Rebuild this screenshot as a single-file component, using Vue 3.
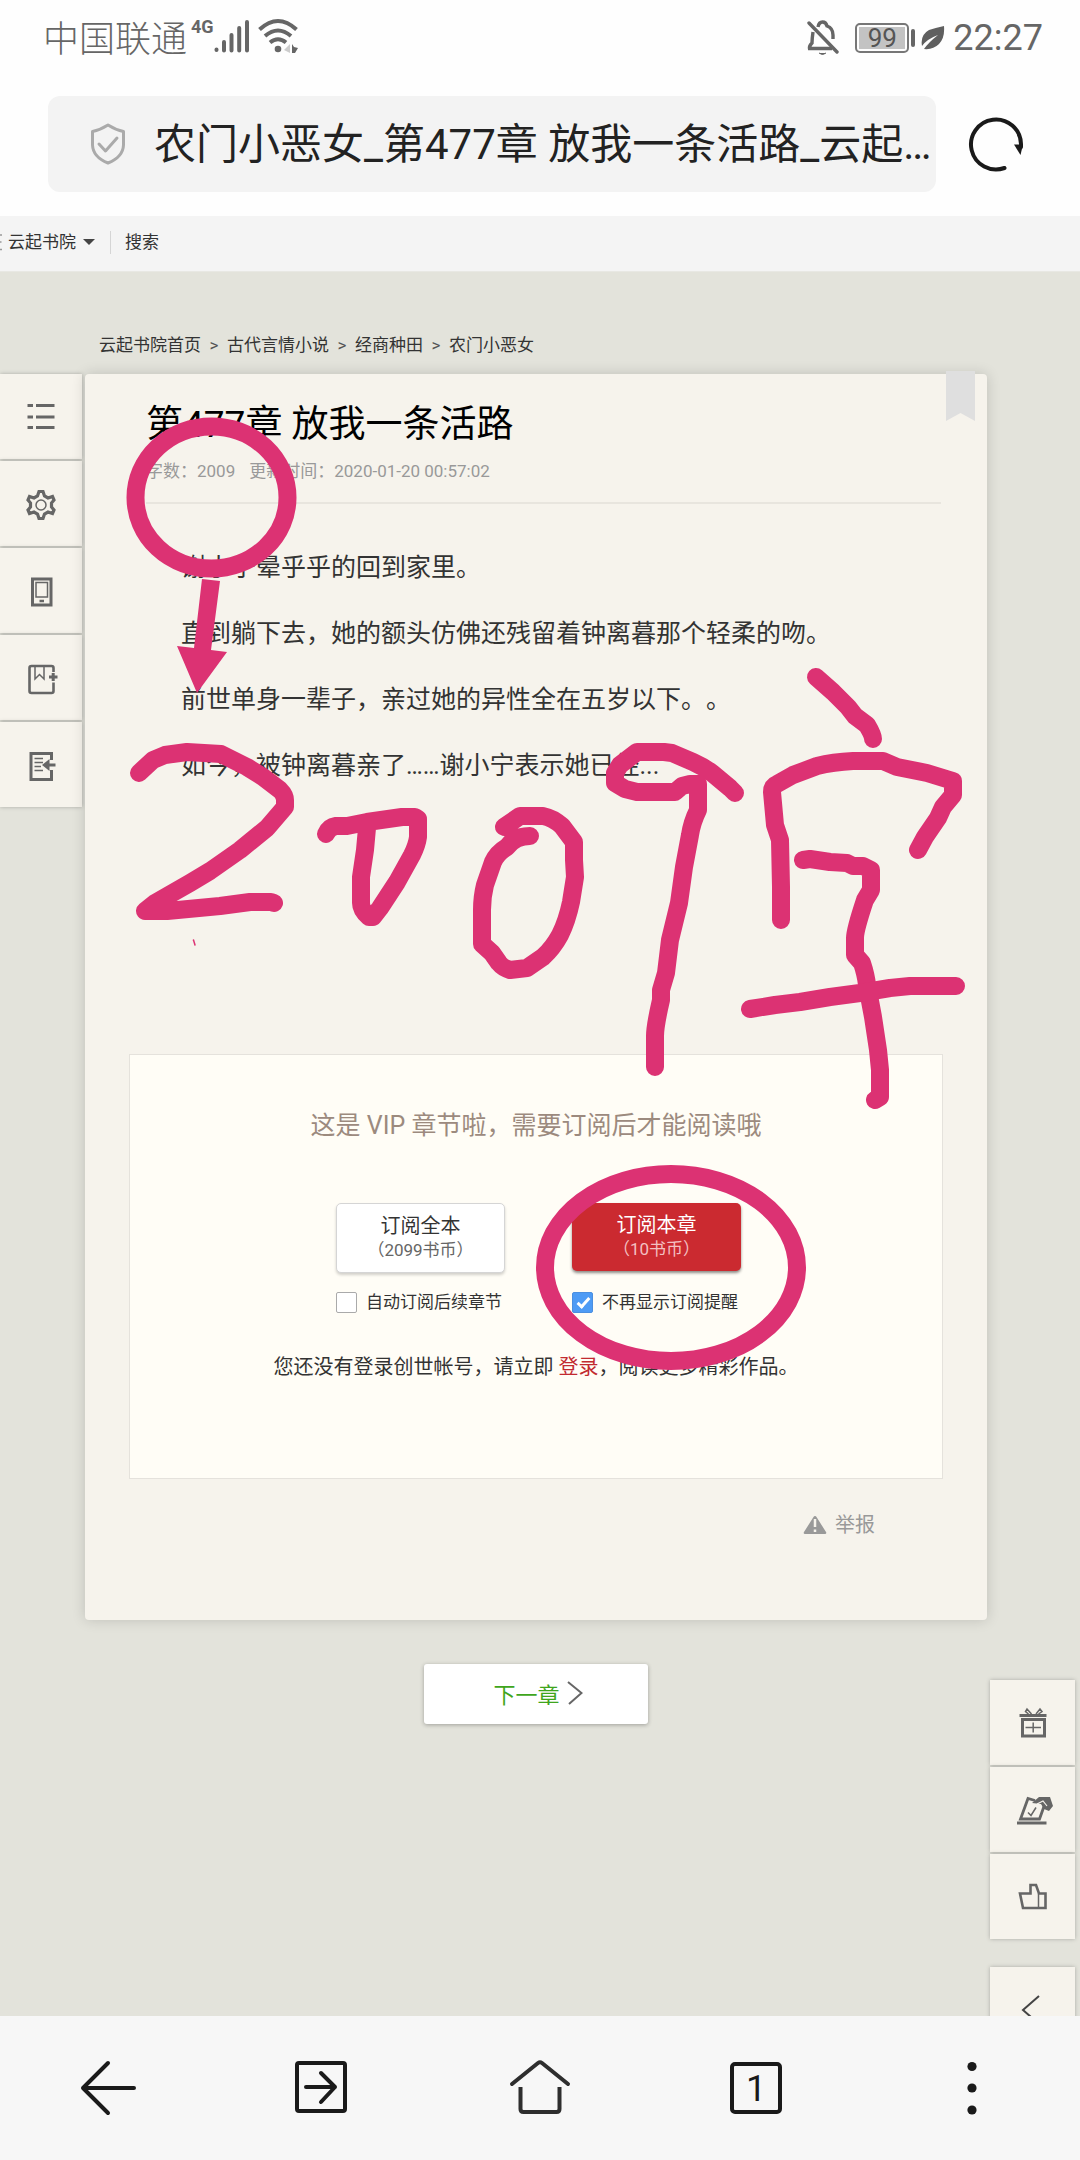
<script setup>
import { ref } from 'vue'

const pageTitle = ref('农门小恶女_第477章 放我一条活路_云起…')
const autoSubscribe = ref(false)
const hideNotice = ref(true)

const crumbs = ['云起书院首页', '古代言情小说', '经商种田', '农门小恶女']

const paragraphs = [
  '谢小宁晕乎乎的回到家里。',
  '直到躺下去，她的额头仿佛还残留着钟离暮那个轻柔的吻。',
  '前世单身一辈子，亲过她的异性全在五岁以下。。',
  '如今，被钟离暮亲了……谢小宁表示她已经...'
]

// 手写标注的笔画
const strokes = [
  // 2
  'M139 773L153 760L165 755L187 752L221 754L247 767L263 777L280 790Q285 795 285 800V807L267 828L240 850L210 871L190 883L155 903L145 911H167L220 906L250 902H271L274 903',
  // 0
  'M326 834Q329 827 336 826H347L367 822L402 817H415L418 819V837Q417 845 412 855L397 882L380 908L373 917H369Q361 910 361 903V877L365 850L367 828',
  // 0
  'M504 827L520 816H543Q553 818 562 826L574 842V860L575 877L571 902Q567 921 560 935Q553 948 543 957L527 968L510 970Q503 968 499 963L492 953L482 944V910Q482 897 485 885L493 862Q497 853 507 847Q515 836 530 836',
  // 9
  'M735 793L730 788L712 773Q704 767 693 762L672 753L664 752H637L620 765L615 773V783L625 789L637 792H675L682 786L690 784H698V810Q692 822 690 835L684 867L679 903L670 940L666 973L661 990V1000Q655 1026 655 1036V1067',
  // 字
  'M816 677L833 692L848 707L855 716L867 725Q873 735 873 739',
  'M781 920V887L780 840L775 825L772 792Q772 786 777 784L793 775L817 766Q833 762 853 761H883L897 767L927 773L953 781V795L943 807L938 818L925 837L918 850',
  'M803 860L810 859L830 862L847 863L853 866H863L871 870V890L865 900Q855 930 855 938V955L862 963Q866 975 867 985L873 1017L878 1050L880 1070V1097L875 1100',
  'M750 1009L775 1005L800 1002L830 997L860 993L890 988L910 986H956'
]
</script>

<template>
  <div class="screen">
    <header class="chrome">
      <div class="status">
        <div class="status-side">
          <span class="carrier">中国联通</span>
          <span class="net">4G</span>
          <svg class="signal" width="36" height="34" viewBox="0 0 36 34" fill="none" stroke="#666" stroke-width="4" stroke-linecap="round">
            <path d="M2.500 30.500V31M10 23V31.500M17.500 16V31.500M25.200 9V31.500M33 3V31.500" />
          </svg>
          <svg class="wifi" width="42" height="36" viewBox="0 0 42 36" fill="none" stroke="#666" stroke-width="4">
            <path d="M1.500 11.500Q20 -5.500 38.500 11.500M7 18Q20 7 33 18M12 24.500Q20 18 28 24.500" />
            <circle cx="20" cy="31" r="3.300" fill="#666" stroke="none" />
            <path d="M32 26V35L26 32Z" fill="#ccc" stroke="none" />
            <path d="M34 26L36 29L40 30L37 35H34Z" fill="#666" stroke="none" />
          </svg>
        </div>
        <div class="status-side">
          <svg class="bell" width="32" height="36" viewBox="0 0 32 36" fill="none" stroke="#666" stroke-width="3.400">
            <path d="M2 4L30 33" stroke-linecap="round" />
            <path d="M11 8Q12 3 15.500 3T20 7Q26 9 26 16V20M6 13Q5 20 5 24Q2 27 2.500 29.500H25" />
            <path d="M12 34Q15.500 37 19 34" fill="#666" stroke-width="1" />
          </svg>
          <span class="battery"><span class="battery-level">99</span></span>
          <span class="battery-cap"></span>
          <svg class="leaf" width="24" height="26" viewBox="0 0 24 26">
            <path d="M23 1Q24 13 18 19Q12 25 3 24Q8 17 17 10Q6 14 1 21Q-1 10 8 5Q14 3 23 1Z" fill="#5f5f5f" />
          </svg>
          <span class="clock">22:27</span>
        </div>
      </div>

      <div class="address-row">
        <div class="address">
          <svg width="36" height="42" viewBox="0 0 36 42" fill="none" stroke="#aaa" stroke-width="3" stroke-linejoin="round" stroke-linecap="round">
            <path d="M18 2Q10 7 2.500 8.500V22Q3 34 18 40Q33 34 33.500 22V8.500Q26 7 18 2Z" />
            <path d="M9 21L15.500 28L27 15" />
          </svg>
          <input v-model="pageTitle" type="text" aria-label="地址栏" />
        </div>
        <button class="reload" aria-label="刷新">
          <svg width="60" height="60" viewBox="0 0 60 60" fill="none">
            <path d="M38.500 54A25 25 0 1 1 55 30V33" stroke="#1a1a1a" stroke-width="4" stroke-linecap="round" />
            <path d="M48 30.500H57L54.500 41Z" fill="#1a1a1a" />
          </svg>
        </button>
      </div>
    </header>

    <nav class="topnav">
      <svg width="2" height="18" viewBox="0 0 2 18" stroke="#999" stroke-width="1.500">
        <path d="M0 2H2M0 9H1.500M0 16.500H2" />
      </svg>
      <a href="#" class="site">云起书院 <i class="caret"></i></a>
      <a href="#" class="search">搜索</a>
    </nav>

    <div class="page">
      <nav class="crumbs">
        <template v-for="(item, i) in crumbs" :key="item">
          <span v-if="i" class="sep">&gt;</span>
          <a href="#">{{ item }}</a>
        </template>
      </nav>

      <div class="layout">
        <aside class="tools">
          <button class="tool" aria-label="目录">
            <svg width="36" height="36" viewBox="0 0 36 36" stroke="#666" stroke-width="3">
              <path d="M4.500 6.500H10M13 6.500H31.500M4.500 18H10M13 18H31.500M4.500 28.500H10M13 28.500H31.500" />
            </svg>
          </button>
          <button class="tool" aria-label="设置">
            <svg width="36" height="36" viewBox="0 0 36 36" fill="none" stroke="#666">
              <path d="M16 5.500H20L21.500 10L25 12L29.500 10.500L31 14L28.500 17V21L31 24L29.500 27.500L25 26L21.500 28L20 32.500H16L14.500 28L11 26L6.500 27.500L5 24L7.500 21V17L5 14L6.500 10.500L11 12L14.500 10Z" stroke-width="3.200" />
              <circle cx="18" cy="19" r="5" stroke-width="1.500" />
            </svg>
          </button>
          <button class="tool" aria-label="手机阅读">
            <svg width="36" height="36" viewBox="0 0 36 36" fill="none" stroke="#666">
              <rect x="9.500" y="6" width="18.500" height="26" stroke-width="3" />
              <rect x="13" y="9.500" width="11.500" height="14.500" stroke-width="1.500" />
              <path d="M16.500 28H21" stroke-width="2.500" />
            </svg>
          </button>
          <button class="tool" aria-label="加入书架">
            <svg width="36" height="36" viewBox="0 0 36 36" fill="none" stroke="#666">
              <path d="M30.500 12V8Q30.500 6 28.500 6H8.500Q6.500 6 6.500 8V31Q6.500 33 8.500 33H28.500Q30.500 33 30.500 31V22.500" stroke-width="2.600" />
              <path d="M12 7V19L16.500 14.500L21 19V7" stroke-width="1.500" />
              <path d="M26 17H34.500M30.200 13V21" stroke-width="3" />
            </svg>
          </button>
          <button class="tool" aria-label="返回书页">
            <svg width="36" height="36" viewBox="0 0 36 36" fill="none" stroke="#666">
              <path d="M28.500 13V6.500H8V32.500H28.500V23" stroke-width="3" />
              <path d="M11.500 11.500H20M11.500 15.500H20M11.500 19.500H18M11.500 23.500H20" stroke-width="1.500" />
              <path d="M24 18H32.500" stroke-width="3" />
              <path d="M19 18L26.500 12V24Z" fill="#666" stroke="none" />
            </svg>
          </button>
        </aside>

        <main class="main">
          <article class="chapter">
            <svg class="ribbon" width="29" height="50" viewBox="0 0 29 50">
              <path d="M0 0H29V50L14.500 42L0 50Z" fill="#dfdfdf" />
            </svg>

            <h1>第477章 放我一条活路</h1>
            <p class="meta"><span>字数：2009</span><span>更新时间：2020-01-20 00:57:02</span></p>

            <div class="content">
              <p v-for="text in paragraphs" :key="text">{{ text }}</p>
            </div>

            <section class="vip">
              <h2>这是 VIP 章节啦，需要订阅后才能阅读哦</h2>
              <div class="plans">
                <div class="plan">
                  <button class="buy">订阅全本<small>（2099书币）</small></button>
                  <label><input v-model="autoSubscribe" type="checkbox" />自动订阅后续章节</label>
                </div>
                <div class="plan">
                  <button class="buy primary">订阅本章<small>（10书币）</small></button>
                  <label><input v-model="hideNotice" type="checkbox" />不再显示订阅提醒</label>
                </div>
              </div>
              <p class="login">您还没有登录创世帐号，请立即 <a href="#">登录</a>，阅读更多精彩作品。</p>
            </section>

            <a href="#" class="report">
              <svg width="24" height="20" viewBox="0 0 24 20">
                <path d="M12 1Q13 1 13.500 2L23 17Q24 19 22 19H2Q0 19 1 17L10.500 2Q11 1 12 1Z" fill="#999" />
                <path d="M12 4V12M12 14.500V17" stroke="#f6f3ec" stroke-width="2.500" />
              </svg>
              举报
            </a>
          </article>

          <a href="#" class="next">
            下一章
            <svg width="16" height="24" viewBox="0 0 16 24" fill="none" stroke="#666" stroke-width="2">
              <path d="M1 1L14.500 12L2 23" />
            </svg>
          </a>
        </main>

        <aside class="tools actions">
          <button class="tool" aria-label="送礼">
            <svg width="40" height="36" viewBox="0 0 40 36" fill="none" stroke="#666">
              <path d="M6.500 10.500H33.500" stroke-width="3" />
              <rect x="9.500" y="14.500" width="22" height="16.500" stroke-width="3" />
              <path d="M12.500 22.500H28M20.200 17.500V27.500" stroke-width="1.500" />
              <path d="M18.500 9L14 4L12.500 6.500L15.500 9M23 9L27 4L29 6.500L25.500 9" stroke-width="1.500" />
            </svg>
          </button>
          <button class="tool" aria-label="投票">
            <svg width="40" height="36" viewBox="0 0 40 36" fill="none" stroke="#666">
              <path d="M4 31H33.500" stroke-width="3" />
              <path d="M22 8.500L15 6.500L7.500 27H26.500L31.500 13" stroke-width="2.800" />
              <path d="M15 20.500L18 23.500L23 15.500" stroke-width="1.500" />
              <path d="M19 11L26 5H37L40 14L36 19L31 17L28 12Z" fill="#666" stroke="none" />
              <path d="M24 12L30 9L34 14" stroke="#f6f3ec" stroke-width="1.200" />
            </svg>
          </button>
          <button class="tool" aria-label="推荐">
            <svg width="40" height="36" viewBox="0 0 40 36" fill="none" stroke="#666">
              <path d="M7 14.500H17.500V6H23L26 14.500H32.500V29H10Z" stroke-width="2.600" />
              <path d="M25.500 14.500V28.500" stroke-width="1.500" />
            </svg>
          </button>
          <button class="tool last" aria-label="收起">
            <svg width="40" height="36" viewBox="0 0 40 36" fill="none" stroke="#444" stroke-width="2">
              <path d="M26 4L10 18L26 32" />
            </svg>
          </button>
        </aside>
      </div>
    </div>

    <footer class="tabbar">
      <button aria-label="后退">
        <svg width="64" height="64" viewBox="0 0 64 64" fill="none" stroke="#1a1a1a" stroke-width="4" stroke-linecap="round" stroke-linejoin="round">
          <path d="M58 32H7M32 7L7 32L32 57" />
        </svg>
      </button>
      <button aria-label="前进">
        <svg width="64" height="64" viewBox="0 0 64 64" fill="none" stroke="#1a1a1a" stroke-width="4" stroke-linecap="round" stroke-linejoin="round">
          <rect x="5" y="7" width="48" height="48" rx="2" />
          <path d="M14 31H43M29 17L43 31L29 46" />
        </svg>
      </button>
      <button aria-label="主页">
        <svg width="64" height="64" viewBox="0 0 64 64" fill="none" stroke="#2e2e2e" stroke-width="4" stroke-linecap="round">
          <path d="M4 28L30 7Q32 5.500 34 7L60 28" />
          <path d="M12.500 31V53Q12.500 56 15.500 56H48.500Q51.500 56 51.500 53V31" stroke-linecap="butt" />
        </svg>
      </button>
      <button aria-label="标签页"><span class="tab-count">1</span></button>
      <button aria-label="菜单">
        <svg width="64" height="64" viewBox="0 0 64 64" fill="#1a1a1a">
          <circle cx="32" cy="10.500" r="4.600" />
          <circle cx="32" cy="32" r="4.600" />
          <circle cx="32" cy="54" r="4.600" />
        </svg>
      </button>
    </footer>

    <svg class="marks" viewBox="0 0 1080 2160" fill="none" stroke="#dc3273" stroke-width="18" stroke-linecap="round" stroke-linejoin="round">
      <ellipse cx="211.500" cy="497.500" rx="76" ry="71" />
      <path d="M202 579L220 581L211 650L227 652L197 693L177 646L194 648Z" fill="#dc3273" stroke="none" />
      <path v-for="d in strokes" :key="d" :d="d" />
      <ellipse cx="671" cy="1267.500" rx="126" ry="93.500" />
      <path d="M193.500 940L195 945" stroke-width="1.500" />
    </svg>
  </div>
</template>

<style>
body {
  background: #e3e3db;
}
</style>

<style scoped>
.screen {
  position: relative;
  display: flex;
  flex-direction: column;
  min-height: 100vh;
  overflow: hidden;
  font-family: Roboto, "Noto Sans CJK SC", sans-serif;
  text-spacing-trim: space-all;
  color: #333;
  background: #e3e3db;
}

button {
  padding: 0;
  border: none;
  background: none;
  font: inherit;
  color: inherit;
  cursor: pointer;
}

a {
  color: inherit;
  text-decoration: none;
}

h1, h2, p {
  margin: 0;
  font-weight: inherit;
}

svg {
  display: block;
  flex: none;
}

.chrome {
  background: #fefefe;
}

.status {
  display: flex;
  justify-content: space-between;
  height: 76px;
  padding: 0 37px 0 43px;
  color: #666;
}

.status-side {
  display: flex;
  align-items: center;
}

.carrier {
  padding-bottom: 4px;
  font-size: 36px;
  font-weight: 300;
}

.net {
  margin: 0 0 22px 4px;
  font-size: 18px;
  line-height: 18px;
  font-weight: 700;
}

.signal,
.wifi {
  margin-bottom: 4px;
}

.wifi {
  margin-left: 8px;
}

.bell {
  margin-bottom: 2px;
}

.battery {
  display: flex;
  width: 54px;
  height: 30px;
  box-sizing: border-box;
  margin-left: 16px;
  padding: 2px;
  border: 2px solid #777;
  border-radius: 5px;
}

.battery-level {
  flex: 1;
  background: #c3c3c3;
  font-size: 26px;
  line-height: 22px;
  text-align: center;
  color: #555;
}

.battery-cap {
  width: 4px;
  height: 18px;
  margin: 0 6px 0 2px;
  border-radius: 2px;
  background: #666;
}

.clock {
  margin-left: 8px;
  font-size: 36px;
}

.address-row {
  display: flex;
  align-items: center;
  padding: 20px 54px 24px 48px;
}

.address {
  display: flex;
  flex: 1;
  align-items: center;
  height: 96px;
  padding-left: 42px;
  border-radius: 12px;
  background: #f3f3f3;
}

.address input {
  flex: 1;
  min-width: 0;
  margin-left: 28px;
  padding: 2px 0 0;
  border: none;
  outline: none;
  background: none;
  font: inherit;
  font-size: 42px;
  line-height: 60px;
  color: #222;
}

.reload {
  margin-left: 30px;
}

.topnav {
  display: flex;
  align-items: center;
  height: 56px;
  padding-bottom: 3px;
  box-sizing: border-box;
  border-bottom: 1px solid #e8e8e3;
  background: #f4f4f4;
  font-size: 17px;
  line-height: 23px;
}

.site {
  display: flex;
  align-items: center;
  margin-left: 6px;
  padding-right: 15px;
  border-right: 1px solid #d5d5d5;
}

.caret {
  margin-left: 7px;
  border: 6px solid transparent;
  border-top-color: #444;
  border-bottom: 0;
}

.search {
  margin-left: 14px;
}

.page {
  display: flex;
  flex: 1;
  flex-direction: column;
  overflow: hidden;
}

.crumbs {
  display: flex;
  padding: 60px 0 16px 99px;
  font-size: 17px;
  line-height: 26px;
}

.sep {
  width: 26px;
  text-align: center;
  color: #555;
}

.layout {
  display: grid;
  flex: 1;
  grid-template-columns: 82px 1fr 85px;
  column-gap: 3px;
  padding-right: 5px;
}

.tools {
  display: flex;
  flex-direction: column;
  gap: 2px;
}

.tool {
  display: flex;
  align-items: center;
  justify-content: center;
  height: 85px;
  background: #f6f3ec;
  box-shadow: 0 0 4px rgba(0, 0, 0, 0.25);
}

.actions {
  align-self: end;
  margin-bottom: -36px;
}

.actions .last {
  margin-top: 26px;
}

.chapter {
  position: relative;
  padding: 25px 44px 80px;
  border-radius: 4px;
  background: #f6f3ec;
  box-shadow: 0 0 14px rgba(0, 0, 0, 0.16);
}

.ribbon {
  position: absolute;
  top: -3px;
  right: 12px;
}

h1 {
  padding-left: 17px;
  font-size: 37px;
  line-height: 52px;
  color: #000;
}

.meta {
  display: flex;
  gap: 14px;
  margin: 8px 2px 31px 17px;
  padding-bottom: 19px;
  border-bottom: 2px solid #e8e5de;
  font-size: 17px;
  line-height: 24px;
  color: #999;
}

.content {
  min-height: 519px;
  padding-left: 52px;
  font-size: 25px;
  line-height: 66px;
}

.vip {
  padding: 51px 0 96px;
  border: 1px solid #e5e2dc;
  background: #fffdf6;
  text-align: center;
}

h2 {
  font-size: 25px;
  line-height: 40px;
  color: #9c8a7e;
}

.plans {
  display: flex;
  justify-content: center;
  gap: 67px;
  margin-top: 57px;
  padding-left: 5px;
}

.plan {
  display: flex;
  flex-direction: column;
  justify-content: space-between;
  width: 169px;
  height: 112px;
}

.buy {
  padding: 10px 0;
  border: 1px solid #d5d5d5;
  border-radius: 5px;
  background: #fff;
  box-shadow: 0 2px 3px rgba(0, 0, 0, 0.18);
  font-size: 20px;
  line-height: 24px;
}

.buy small {
  display: block;
  font-size: 17px;
  color: #666;
}

.buy.primary {
  border: none;
  background: #cb2a30;
  box-shadow: 0 2px 3px rgba(0, 0, 0, 0.45);
  color: #fff;
}

.buy.primary small {
  color: #f3c0c2;
}

.plan label {
  display: flex;
  align-items: center;
  gap: 9px;
  font-size: 17px;
  line-height: 26px;
  white-space: nowrap;
}

.plan input {
  position: relative;
  width: 21px;
  height: 21px;
  margin: 0;
  border: 1px solid #aaa;
  border-radius: 2px;
  background: #fff;
  appearance: none;
}

.plan input:checked {
  border-color: #4b8fe0;
  background: #4e9bf5;
}

.plan input:checked::after {
  content: "";
  position: absolute;
  top: 2px;
  left: 7px;
  width: 4px;
  height: 10px;
  border: solid #fff;
  border-width: 0 3px 3px 0;
  transform: rotate(42deg);
}

.login {
  margin-top: 37px;
  font-size: 20px;
  line-height: 30px;
}

.login a {
  color: #c22a30;
}

.report {
  display: flex;
  align-items: center;
  justify-content: flex-end;
  gap: 8px;
  margin: 31px 68px 0 0;
  font-size: 20px;
  line-height: 30px;
  color: #999;
}

.next {
  display: flex;
  align-items: center;
  justify-content: center;
  gap: 7px;
  width: 224px;
  height: 60px;
  box-sizing: border-box;
  margin: 44px auto 0;
  padding: 0 0 3px 4px;
  border-radius: 3px;
  background: #fff;
  box-shadow: 0 1px 4px rgba(0, 0, 0, 0.3);
  font-size: 22px;
  color: #3fa51c;
}

.tabbar {
  position: relative;
  display: flex;
  height: 144px;
  background: #f7f7f7;
}

.tabbar button {
  display: flex;
  flex: 1;
  align-items: center;
  justify-content: center;
}

.tab-count {
  width: 44px;
  height: 44px;
  border: 4px solid #1a1a1a;
  border-radius: 5px;
  font-size: 36px;
  line-height: 46px;
  color: #1a1a1a;
}

.marks {
  position: absolute;
  top: 0;
  left: 0;
  width: 100%;
  pointer-events: none;
}
</style>
